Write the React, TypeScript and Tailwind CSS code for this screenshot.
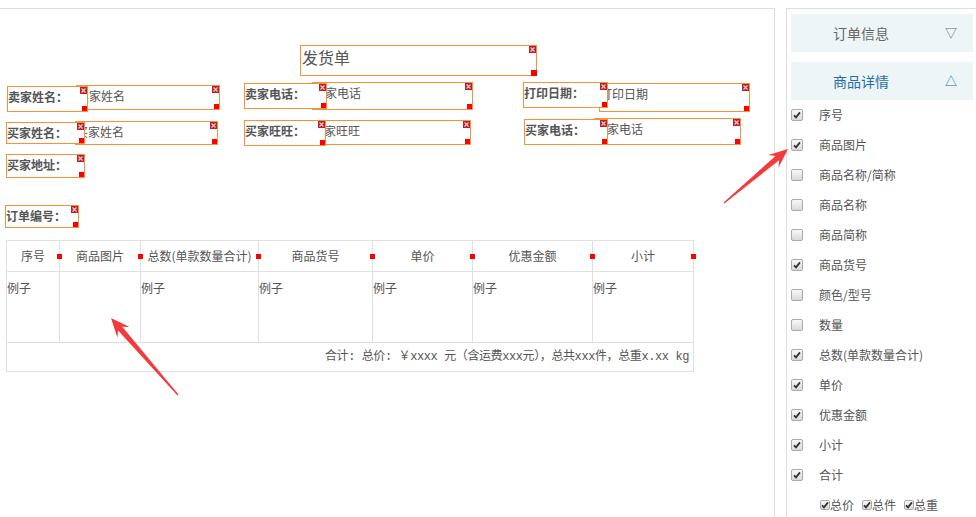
import React from 'react';

type Field = { text: string; x: number; y: number; w: number; h: number };

// canvas origin sits under the 1px top border at page y=9
const OY = 9;

const values: Field[] = [
  { text: '卖家姓名', x: 76, y: 85, w: 144, h: 25 },
  { text: '买家姓名', x: 75, y: 121, w: 143, h: 24 },
  { text: '卖家电话', x: 312, y: 82, w: 161, h: 28 },
  { text: '卖家旺旺', x: 311, y: 120, w: 160, h: 25 },
  { text: '打印日期', x: 599, y: 83, w: 151, h: 29 },
  { text: '买家电话', x: 594, y: 118, w: 147, h: 27 },
];

const labels: Field[] = [
  { text: '卖家姓名：', x: 7, y: 86, w: 81, h: 26 },
  { text: '买家姓名：', x: 6, y: 122, w: 79, h: 22 },
  { text: '买家地址：', x: 6, y: 154, w: 79, h: 24 },
  { text: '订单编号：', x: 5, y: 205, w: 74, h: 23 },
  { text: '卖家电话：', x: 244, y: 83, w: 83, h: 26 },
  { text: '买家旺旺：', x: 244, y: 120, w: 82, h: 26 },
  { text: '打印日期：', x: 523, y: 82, w: 85, h: 26 },
  { text: '买家电话：', x: 524, y: 119, w: 84, h: 26 },
];

const columns = ['序号', '商品图片', '总数(单款数量合计)', '商品货号', '单价', '优惠金额', '小计'];

const options: [string, boolean][] = [
  ['序号', true],
  ['商品图片', true],
  ['商品名称/简称', false],
  ['商品名称', false],
  ['商品简称', false],
  ['商品货号', true],
  ['颜色/型号', false],
  ['数量', false],
  ['总数(单款数量合计)', true],
  ['单价', true],
  ['优惠金额', true],
  ['小计', true],
  ['合计', true],
];

const CloseIcon = () => (
  <svg className="absolute top-0 right-0" width="7" height="7" viewBox="0 0 7 7">
    <rect width="7" height="7" fill="#b5202b" />
    <path d="M1.5 1.5L5.5 5.5M5.5 1.5L1.5 5.5" stroke="#f7c9cc" strokeWidth="1.2" />
  </svg>
);

const Handle = () => <span className="absolute -right-px -bottom-px w-[6px] h-[6px] bg-[#ff0000]" />;

const FieldBox = ({ f, bold }: { f: Field; bold?: boolean }) => (
  <div
    className={`absolute border border-[#f7923a] bg-white text-[12px] leading-[20px] text-[#555] whitespace-nowrap ${
      bold ? 'font-bold text-[#4a4a4a] overflow-hidden' : 'overflow-hidden'
    }`}
    style={{ left: f.x, top: f.y - OY, width: f.w, height: f.h }}
  >
    {f.text}
    <CloseIcon />
    <Handle />
  </div>
);

const CheckMark = () => (
  <svg width="8" height="8" viewBox="0 0 8 8">
    <path d="M1 4.3L3 6.4L7 1.4" stroke="#333" strokeWidth="1.8" fill="none" />
  </svg>
);

const Checkbox = ({ checked }: { checked: boolean }) => (
  <span className="flex items-center justify-center w-[12px] h-[12px] rounded-[2px] border border-[#aaa] bg-gradient-to-b from-[#f8f8f8] to-[#dadada]">
    {checked && <CheckMark />}
  </span>
);

const SmallCheck = () => (
  <span className="flex items-center justify-center w-[10px] h-[10px] rounded-[2px] border border-[#aaa] bg-gradient-to-b from-[#f8f8f8] to-[#dadada]">
    <CheckMark />
  </span>
);

function arrowPoints(tx: number, ty: number, hx: number, hy: number) {
  const dx = hx - tx;
  const dy = hy - ty;
  const len = Math.hypot(dx, dy);
  const ux = dx / len;
  const uy = dy / len;
  const nx = -uy;
  const ny = ux;
  const headLen = 19;
  const headW = 8;
  const bx = hx - ux * headLen;
  const by = hy - uy * headLen;
  const nbx = hx - ux * (headLen - 5);
  const nby = hy - uy * (headLen - 5);
  const pts = [
    [tx + nx * 0.6, ty + ny * 0.6],
    [nbx + nx * 2.8, nby + ny * 2.8],
    [bx + nx * headW, by + ny * headW],
    [hx, hy],
    [bx - nx * headW, by - ny * headW],
    [nbx - nx * 2.8, nby - ny * 2.8],
    [tx - nx * 0.6, ty - ny * 0.6],
  ];
  return pts.map((p) => p.map((v) => v.toFixed(1)).join(',')).join(' ');
}

export default function App() {
  return (
    <div className="relative w-[976px] h-[517px] overflow-hidden bg-white font-['Noto_Sans_CJK_SC',sans-serif] text-[#555]">
      <div className="flex h-full pt-2">
        {/* design canvas */}
        <div className="relative w-[775px] h-full border-t border-r border-[#dedede]">
          {values.map((f) => (
            <FieldBox key={f.text} f={f} />
          ))}
          {labels.map((f) => (
            <FieldBox key={f.text} f={f} bold />
          ))}

          <div
            className="absolute border border-[#f7923a] bg-white text-[16px] leading-[22px] text-[#555] pl-[1px]"
            style={{ left: 300, top: 45 - OY, width: 237, height: 31 }}
          >
            发货单
            <CloseIcon />
            <Handle />
          </div>

          {/* goods table */}
          <div
            className="absolute border border-[#e0e0e0] text-[12px] text-[#555]"
            style={{ left: 6, top: 240 - OY, width: 688 }}
          >
            <div className="grid grid-cols-[53px_81px_118px_114px_100px_120px_100px] h-[30px]">
              {columns.map((c, i) => (
                <div
                  key={c}
                  className={`relative flex items-center justify-center ${i < columns.length - 1 ? 'border-r border-[#e0e0e0]' : ''}`}
                >
                  {c}
                  <span className="absolute right-[-3px] top-[13px] w-[5px] h-[5px] bg-[#ff0000] z-10" />
                </div>
              ))}
            </div>
            <div className="grid grid-cols-[53px_81px_118px_114px_100px_120px_100px] h-[71px] border-t border-[#e0e0e0]">
              {columns.map((c, i) => (
                <div
                  key={c}
                  className={`pt-[8px] leading-[16px] ${i < columns.length - 1 ? 'border-r border-[#e0e0e0]' : ''}`}
                >
                  {i === 1 ? '' : '例子'}
                </div>
              ))}
            </div>
            <div className="flex items-center justify-end h-[29px] border-t border-[#e0e0e0] pr-[4px] font-['Liberation_Mono','Noto_Sans_CJK_SC',monospace] text-[12px] tracking-[-0.4px]">
              合计: 总价: ￥xxxx 元（含运费xxx元），总共xxx件，总重x.xx kg
            </div>
          </div>
        </div>

        {/* side panel */}
        <div className="ml-[11px] flex-1 border-t border-l border-[#dedede] pl-[4px] pt-[5px]">
          <div className="flex flex-col gap-[10px] w-[182px]">
            <div className="flex items-center justify-between h-[38px] bg-[#edf5f7] pl-[42px] pr-[16px] text-[14px] text-[#666]">
              <span>订单信息</span>
              <span className="text-[12px]">▽</span>
            </div>
            <div className="flex items-center justify-between h-[38px] bg-[#edf5f7] pl-[42px] pr-[16px] text-[14px] text-[#1f6fa5]">
              <span>商品详情</span>
              <span className="text-[12px]">△</span>
            </div>
          </div>
          <div className="flex flex-col text-[12px] text-[#555]">
            {options.map(([name, checked]) => (
              <div key={name} className="flex items-center h-[30px] gap-[16px]">
                <Checkbox checked={checked} />
                <span>{name}</span>
              </div>
            ))}
            <div className="flex items-center h-[30px] pl-[29px] gap-[8px]">
              {['总价', '总件', '总重'].map((t) => (
                <span key={t} className="flex items-center">
                  <SmallCheck />
                  <span>{t}</span>
                </span>
              ))}
            </div>
          </div>
        </div>
      </div>

      {/* annotation arrows */}
      <svg className="absolute inset-0 pointer-events-none" width="976" height="517">
        <polygon points={arrowPoints(178, 395, 111, 318)} fill="#f43b3b" />
        <polygon points={arrowPoints(724, 203, 788, 149)} fill="#f43b3b" />
      </svg>
    </div>
  );
}
